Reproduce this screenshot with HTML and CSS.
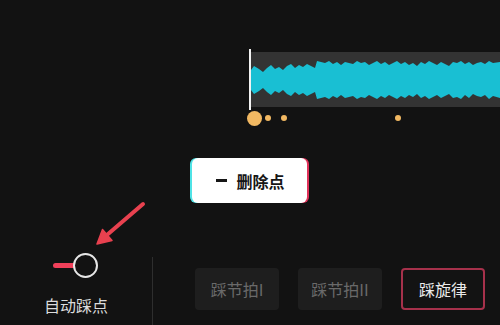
FILE: index.html
```html
<!DOCTYPE html>
<html lang="zh">
<head>
<meta charset="utf-8">
<title>自动踩点</title>
<link rel="stylesheet" href="styles.css">
</head>
<body>
<div class="screen">
  <div class="timeline">
    <div class="track">
      <svg class="wave" width="249" height="55" viewBox="0 0 249 55">
        <polygon fill="#19bfd3" points="0,18 3,14 8,17 12,20 16,16 20,13 24,17 28,15 32,18 36,14 40,12 44,16 48,13 52,15 56,12 60,14 64,16 66,9 70,10 74,11 78,9 82,12 86,10 90,13 94,10 98,11 102,12 106,9 110,11 114,10 118,13 122,11 126,9 130,12 134,10 138,13 142,11 146,9 150,12 154,10 158,13 162,11 166,14 170,10 174,12 178,9 182,11 186,13 190,10 194,12 198,14 202,10 206,11 210,9 214,12 218,10 222,13 226,11 230,10 234,12 238,9 242,11 249,10 249,46 242,44 238,47 234,43 230,45 226,44 222,42 218,46 214,43 210,47 206,45 202,46 198,42 194,44 190,46 186,43 182,45 178,47 174,44 170,46 166,42 162,45 158,43 154,46 150,44 146,47 142,45 138,43 134,46 130,44 126,47 122,45 118,43 114,46 110,45 106,47 102,44 98,45 94,46 90,43 86,46 82,44 78,47 74,45 70,46 66,47 64,40 60,42 56,44 52,41 48,43 44,40 40,44 36,42 32,38 28,41 24,39 20,43 16,40 12,36 8,39 3,42 0,38"/>
      </svg>
      <div class="playhead"></div>
    </div>
    <div class="dots">
      <span class="dot dot-big"></span>
      <span class="dot dot-1"></span>
      <span class="dot dot-2"></span>
      <span class="dot dot-3"></span>
    </div>
  </div>

  <div class="delete-btn"><span class="minus"></span><span class="delete-text">删除点</span></div>

  <div class="bottom">
    <div class="auto">
      <div class="toggle"><span class="toggle-bar"></span><span class="toggle-knob"></span></div>
      <div class="auto-label">自动踩点</div>
    </div>
    <div class="divider"></div>
    <div class="modes">
      <div class="mode">踩节拍I</div>
      <div class="mode">踩节拍II</div>
      <div class="mode mode-active">踩旋律</div>
    </div>
  </div>

  <svg class="arrow" width="160" height="260" viewBox="0 0 160 260">
    <line x1="143" y1="204" x2="104" y2="237.5" stroke="#e8414f" stroke-width="4" stroke-linecap="round"/>
    <polygon points="97,244 102.5,229.5 112,240.5" fill="#e8414f" stroke="#e8414f" stroke-width="1.5" stroke-linejoin="round"/>
  </svg>
</div>
</body>
</html>
```

FILE: styles.css
```css
* { box-sizing: border-box; }
html, body {
  margin: 0;
  padding: 0;
  background: #121212;
}
body {
  font-family: "Noto Sans CJK SC", "Noto Sans", sans-serif;
}
.screen {
  position: relative;
  width: 500px;
  height: 325px;
  overflow: hidden;
  display: flex;
  flex-direction: column;
}
.timeline {
  margin-left: 251px;
  margin-top: 52px;
}
.track {
  position: relative;
  height: 55px;
  background: #333333;
}
.wave { display: block; }
.playhead {
  position: absolute;
  left: -2px;
  top: -3px;
  width: 2px;
  height: 61px;
  background: #f2f2f2;
}
.dots {
  position: relative;
  height: 16px;
  margin-top: 3px;
}
.dot {
  position: absolute;
  width: 6px;
  height: 6px;
  border-radius: 50%;
  background: #f1b862;
  top: 5px;
}
.dot-big { width: 15px; height: 15px; left: -4.5px; top: 0.5px; }
.dot-1 { left: 14px; }
.dot-2 { left: 30px; }
.dot-3 { left: 144px; }

.delete-btn {
  margin-left: 192px;
  margin-top: 32px;
  width: 115px;
  height: 45px;
  background: #ffffff;
  border-radius: 6px;
  box-shadow: -2px 0 0 #4fe3e6, 2px 0 0 #e0325a;
  display: flex;
  align-items: center;
  justify-content: center;
  gap: 9px;
  color: #161616;
}
.minus {
  width: 11px;
  height: 3px;
  background: #161616;
  margin-left: 2px;
}
.delete-text {
  font-size: 16px;
  font-weight: 700;
  line-height: 1;
}

.bottom {
  display: flex;
  margin-top: 50px;
  height: 72px;
}
.auto {
  width: 152px;
  display: flex;
  flex-direction: column;
  align-items: center;
}
.toggle {
  display: flex;
  align-items: center;
  height: 25px;
  margin-left: -2px;
}
.toggle-bar {
  width: 22px;
  height: 5px;
  background: #f0405a;
  border-radius: 3px 0 0 3px;
}
.toggle-knob {
  width: 25px;
  height: 25px;
  border-radius: 50%;
  border: 2px solid #e6e6e6;
  margin-left: -2px;
}
.auto-label {
  margin-top: 16px;
  font-size: 16px;
  line-height: 22px;
  color: #dcdcdc;
}
.divider {
  width: 1px;
  margin-top: 4px;
  background: #2e2e2e;
}
.modes {
  display: flex;
  gap: 19px;
  margin-left: 42px;
  margin-top: 15px;
  align-items: flex-start;
}
.mode {
  width: 84px;
  height: 42px;
  border-radius: 4px;
  background: #1e1e1e;
  color: #6a6a6a;
  font-size: 16px;
  display: flex;
  align-items: center;
  justify-content: center;
}
.mode-active {
  background: #131313;
  border: 2px solid #a6314b;
  color: #ebebeb;
}
.arrow {
  position: absolute;
  left: 0;
  top: 0;
}
```
